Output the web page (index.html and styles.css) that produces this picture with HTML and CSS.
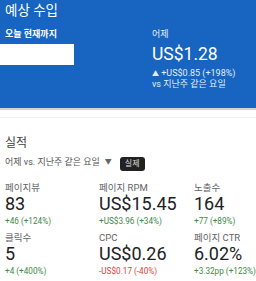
FILE: index.html
```html
<!DOCTYPE html>
<html lang="ko">
<head>
<meta charset="utf-8">
<link rel="stylesheet" href="styles.css">
</head>
<body>
<header class="earnings">
  <h1 class="title">예상 수입</h1>
  <div class="cols">
    <div class="col left">
      <div class="label bold">오늘 현재까지</div>
      <div class="redact"></div>
    </div>
    <div class="col right">
      <div class="label">어제</div>
      <div class="big">US$1.28</div>
      <div class="delta first"><span class="tri">▲</span> +US$0.85 (+198%)</div>
      <div class="delta">vs 지난주 같은 요일</div>
    </div>
  </div>
</header>
<section class="perf">
  <h2 class="perf-title">실적</h2>
  <div class="compare">
    <span>어제 vs. 지난주 같은 요일</span>
    <span class="caret">▼</span>
    <span class="tip">실제</span>
  </div>
  <div class="grid">
    <div class="cell">
      <div class="m-label">페이지뷰</div>
      <div class="m-value">83</div>
      <div class="m-delta up">+46 (+124%)</div>
    </div>
    <div class="cell">
      <div class="m-label">페이지 RPM</div>
      <div class="m-value">US$15.45</div>
      <div class="m-delta up">+US$3.96 (+34%)</div>
    </div>
    <div class="cell">
      <div class="m-label">노출수</div>
      <div class="m-value">164</div>
      <div class="m-delta up">+77 (+89%)</div>
    </div>
    <div class="cell">
      <div class="m-label">클릭수</div>
      <div class="m-value">5</div>
      <div class="m-delta up">+4 (+400%)</div>
    </div>
    <div class="cell">
      <div class="m-label">CPC</div>
      <div class="m-value">US$0.26</div>
      <div class="m-delta down">-US$0.17 (-40%)</div>
    </div>
    <div class="cell">
      <div class="m-label">페이지 CTR</div>
      <div class="m-value">6.02%</div>
      <div class="m-delta up">+3.32pp (+123%)</div>
    </div>
  </div>
</section>
</body>
</html>
```
FILE: styles.css
```css
* { box-sizing: border-box; margin: 0; padding: 0; }
body {
  margin: 0;
  width: 256px;
  height: 281px;
  overflow: hidden;
  background: #fff;
  font-family: Roboto, "Noto Sans CJK KR", sans-serif;
}
.earnings {
  background: #1765c1;
  color: #fff;
  height: 110px;
  border-bottom: 2px solid #d9d0c6;
  padding-top: 2px;
}
.title {
  font-size: 13.5px;
  font-weight: 400;
  line-height: 16px;
  padding-left: 5px;
}
.cols {
  display: flex;
  margin-top: 10px;
}
.col.left { width: 152px; }
.label {
  font-size: 9px;
  line-height: 12px;
  padding-left: 5px;
  color: #e8f0fb;
}
.label.bold { font-weight: 700; color: #fff; }
.right .label { padding-left: 0; }
.redact {
  margin-top: 4px;
  width: 74px;
  height: 21px;
  background: #fff;
}
.big {
  font-size: 17.5px;
  line-height: 22px;
  margin-top: 3px;
}
.delta {
  font-size: 9px;
  line-height: 10px;
  color: #e3ecf9;
  white-space: nowrap;
}
.delta.first { margin-top: 3px; }
.tri { font-size: 7px; }
.perf {
  border-top: 1px solid #f0f0f0;
  margin-top: 7px;
  padding: 0 0 0 5px;
}
.perf-title {
  font-size: 12px;
  font-weight: 400;
  color: #424242;
  line-height: 16px;
  margin-top: 17px;
}
.compare {
  display: flex;
  align-items: center;
  gap: 5px;
  margin-top: 3px;
  font-size: 9px;
  color: #555;
  height: 14px;
}
.caret { font-size: 7px; color: #666; }
.tip {
  background: #222;
  color: #ddd;
  border-radius: 3px;
  padding: 0 5px;
  line-height: 14px;
  font-size: 8px;
  margin-left: 3px;
  margin-top: 6px;
}
.grid {
  display: grid;
  grid-template-columns: 94px 95px 1fr;
  margin-top: 14px;
  row-gap: 5px;
}
.m-label {
  font-size: 9.5px;
  line-height: 11px;
  color: #5f6368;
  white-space: nowrap;
}
.m-value {
  font-size: 18px;
  line-height: 22px;
  color: #202124;
  white-space: nowrap;
}
.m-delta {
  font-size: 8.2px;
  line-height: 12px;
  white-space: nowrap;
}
.up { color: #3c8a46; }
.down { color: #e0433a; }
```
